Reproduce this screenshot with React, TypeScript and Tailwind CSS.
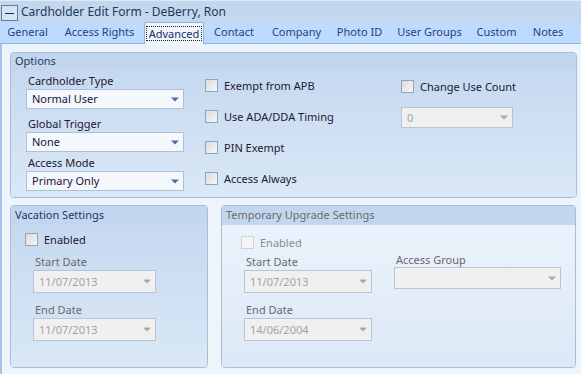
import React from 'react';

const font = { fontFamily: '"Noto Sans", "Open Sans", sans-serif' };

function Arrow({ disabled }: { disabled?: boolean }) {
  return (
    <svg width="8" height="5" viewBox="0 0 8 5" className="mr-[4px]">
      <path d="M0 0.5 L8 0.5 L4 4.5 Z" fill={disabled ? '#a8a8a8' : '#4d6f9a'} />
    </svg>
  );
}

function Select({ value, disabled, className }: { value: string; disabled?: boolean; className: string }) {
  return (
    <div
      className={
        'flex items-center justify-between border pl-[5px] ' +
        (disabled
          ? 'border-[#b6c6da] bg-[#f0f0f0] text-[#a3a3a3] '
          : 'border-[#aac0de] bg-[#f4f8fd] text-[#21143a] ') +
        className
      }
    >
      <span className="-mt-[1px] leading-none">{value}</span>
      <Arrow disabled={disabled} />
    </div>
  );
}

function Check({ label, disabled, className }: { label: string; disabled?: boolean; className?: string }) {
  return (
    <div className={'flex items-center ' + (className || '')}>
      <div
        className={
          'h-[13px] w-[13px] border ' +
          (disabled
            ? 'border-[#c9d3df] bg-[#f4f4f4]'
            : 'border-[#8fa4bf] bg-gradient-to-br from-[#dcdcdc] to-[#f7f7f7]')
        }
      />
      <span className={'ml-[6px] leading-none ' + (disabled ? 'text-[#8c8c8c]' : 'text-[#1d1830]')}>{label}</span>
    </div>
  );
}

function Group({
  title,
  disabled,
  className,
  headerClass,
  children,
}: {
  title: string;
  disabled?: boolean;
  className: string;
  headerClass: string;
  children: React.ReactNode;
}) {
  return (
    <div
      className={
        'flex flex-col overflow-hidden rounded-[4px] border border-[#a9bdd6] ' + className
      }
    >
      <div
        className={
          'flex items-center bg-[#c2d7ef] pl-[4px] ' +
          (disabled ? 'text-[#6c6c6c] ' : 'text-[#1e395b] ') +
          headerClass
        }
      >
        {title}
      </div>
      <div
        className={
          'relative flex-1 ' +
          (disabled
            ? 'bg-gradient-to-b from-[#ebf2fb] to-[#dce8f6]'
            : 'bg-gradient-to-b from-[#c6d9f0] to-[#dae8f6]')
        }
      >
        {children}
      </div>
    </div>
  );
}

const tabs = [
  { name: 'General', w: 'w-[55px]' },
  { name: 'Access Rights', w: 'w-[89px]' },
  { name: 'Advanced', w: 'w-[60px]' },
  { name: 'Contact', w: 'w-[60px]' },
  { name: 'Company', w: 'w-[65px]' },
  { name: 'Photo ID', w: 'w-[61px]' },
  { name: 'User Groups', w: 'w-[79px]' },
  { name: 'Custom', w: 'w-[55px]' },
  { name: 'Notes', w: 'w-[48px]' },
];

export default function App() {
  return (
    <div className="h-[374px] w-[581px] overflow-hidden bg-[#eef4fc] text-[11px]" style={font}>
      {/* Title bar */}
      <div className="flex h-[22px] items-center border-t border-[#dde9f8] bg-[#c3d7ef]">
        <div className="ml-[1px] mt-[3px] flex h-[16px] w-[17px] items-center justify-center border border-[#6a7d94] bg-[#d6e3f3]">
          <div className="h-[1px] w-[9px] bg-[#1b2b40]" />
        </div>
        <span className="ml-[3px] text-[12px] text-[#1e395b]">Cardholder Edit Form - DeBerry, Ron</span>
      </div>

      {/* Tabs */}
      <div className="flex h-[22px] items-end border-b border-[#8db2e3] bg-[#bedaff]">
        {tabs.map((t) =>
          t.name === 'Advanced' ? (
            <div
              key={t.name}
              className={
                'relative -mb-[1px] flex h-[22px] items-center justify-center rounded-t-[2px] border border-b-0 border-[#8db2e3] bg-[#f1f6fd] ' +
                t.w
              }
            >
              <span className="border border-dotted border-[#222] px-[2px] leading-[13px] text-[#15306b]">
                {t.name}
              </span>
            </div>
          ) : (
            <div key={t.name} className={'flex h-[21px] items-center justify-center text-[#273f7f] ' + t.w}>
              {t.name}
            </div>
          )
        )}
      </div>

      {/* Content */}
      <div className="h-[330px] border-l-2 border-[#a4c2ea] pl-[8px] pr-[4px] pt-[8px]">
        <Group title="Options" className="h-[146px] w-[567px]" headerClass="h-[17px]">
          <div className="flex pl-[15px] pt-[3px]">
            <div className="flex w-[158px] flex-col">
              <div className="flex h-[16px] items-center pl-[2px] text-[#1d1830]">Cardholder Type</div>
              <Select value="Normal User" className="h-[20px]" />
              <div className="mt-[7px] flex h-[16px] items-center pl-[2px] text-[#1d1830]">Global Trigger</div>
              <Select value="None" className="h-[20px]" />
              <div className="mt-[3px] flex h-[16px] items-center pl-[2px] text-[#1d1830]">Access Mode</div>
              <Select value="Primary Only" className="h-[20px]" />
            </div>
            <div className="ml-[21px] flex w-[196px] flex-col pt-[6px]">
              <Check label="Exempt from APB" className="h-[13px]" />
              <Check label="Use ADA/DDA Timing" className="mt-[18px] h-[13px]" />
              <Check label="PIN Exempt" className="mt-[18px] h-[13px]" />
              <Check label="Access Always" className="mt-[18px] h-[13px]" />
            </div>
            <div className="flex flex-col pt-[7px]">
              <Check label="Change Use Count" className="h-[13px]" />
              <Select value="0" disabled className="mt-[14px] h-[21px] w-[112px]" />
            </div>
          </div>
        </Group>

        <div className="mt-[7px] flex">
          <Group title="Vacation Settings" className="h-[163px] w-[198px]" headerClass="h-[19px]">
            <div className="flex flex-col pl-[14px] pt-[8px]">
              <Check label="Enabled" className="h-[13px]" />
              <div className="ml-[8px] mt-[8px] flex h-[16px] items-center pl-[2px] text-[#6a6a6a]">Start Date</div>
              <Select value="11/07/2013" disabled className="ml-[8px] h-[23px] w-[123px]" />
              <div className="ml-[8px] mt-[9px] flex h-[16px] items-center pl-[2px] text-[#6a6a6a]">End Date</div>
              <Select value="11/07/2013" disabled className="ml-[8px] h-[23px] w-[123px]" />
            </div>
          </Group>

          <Group
            title="Temporary Upgrade Settings"
            disabled
            className="ml-[13px] h-[163px] w-[355px]"
            headerClass="h-[19px]"
          >
            <div className="flex flex-col pl-[19px] pt-[11px]">
              <Check label="Enabled" disabled className="h-[13px]" />
              <div className="mt-[5px] flex">
                <div className="flex flex-col">
                  <div className="ml-[3px] flex h-[16px] items-center pl-[2px] text-[#6a6a6a]">Start Date</div>
                  <Select value="11/07/2013" disabled className="ml-[3px] h-[23px] w-[128px]" />
                  <div className="ml-[3px] mt-[9px] flex h-[16px] items-center pl-[2px] text-[#6a6a6a]">End Date</div>
                  <Select value="14/06/2004" disabled className="ml-[3px] h-[23px] w-[128px]" />
                </div>
                <div className="ml-[22px] flex flex-col">
                  <div className="flex h-[13px] items-center pl-[2px] text-[#6a6a6a]">Access Group</div>
                  <Select value="" disabled className="h-[22px] w-[167px]" />
                </div>
              </div>
            </div>
          </Group>
        </div>
      </div>
    </div>
  );
}
